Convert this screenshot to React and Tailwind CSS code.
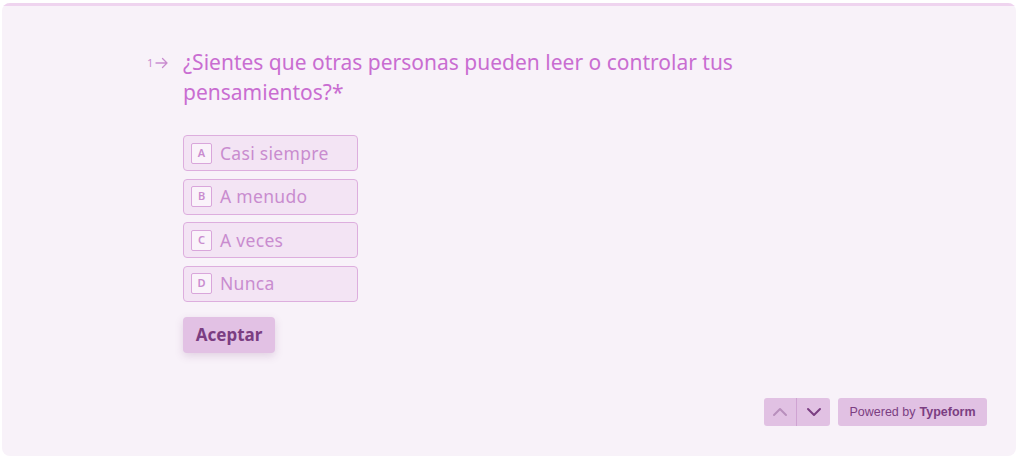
import React, { useState } from 'react'

const choices = [
    { key: 'A', label: 'Casi siempre' },
    { key: 'B', label: 'A menudo' },
    { key: 'C', label: 'A veces' },
    { key: 'D', label: 'Nunca' },
]

const Chevron = ({ up, className }) => (
    <svg width="18" height="18" viewBox="0 0 18 18" fill="none" className={className}>
        <path
            d={up ? 'M3 12 L9 6 L15 12' : 'M3 6 L9 12 L15 6'}
            stroke="currentColor"
            strokeWidth="2"
            strokeLinecap="round"
            strokeLinejoin="round"
        />
    </svg>
)

const App = () => {
    const [selected, setSelected] = useState(null)

    return (
        <div className="w-[1024px] h-[464px] bg-white p-[2px] pt-[3px] pr-[8px] pb-[8px]" style={{ fontFamily: '"Noto Sans", Lato, sans-serif' }}>
            <div className="relative h-full rounded-lg bg-[#f8f2f9] overflow-hidden flex flex-col">
                {/* progress */}
                <div className="h-[3px] bg-[#efd4ef]" />

                <div className="flex-1 pl-[145px] pt-[41px]">
                    <div className="flex">
                        <div className="w-[36px] flex items-start pt-[10px] text-[#c98ccf]">
                            <span className="text-[11px] leading-none">1</span>
                            <svg width="14" height="12" viewBox="0 0 14 12" fill="none" className="ml-[2px]">
                                <path d="M1 6 H12 M7.5 1.5 L12 6 L7.5 10.5" stroke="currentColor" strokeWidth="1.3" strokeLinecap="round" strokeLinejoin="round" />
                            </svg>
                        </div>
                        <div>
                            <h1 className="text-[21px] leading-[30px] text-[#c96dd1] w-[580px]">
                                ¿Sientes que otras personas pueden leer o controlar tus pensamientos?*
                            </h1>

                            <div className="mt-[28px] flex flex-col gap-[7.5px]">
                                {choices.map((c) => (
                                    <button
                                        key={c.key}
                                        onClick={() => setSelected(c.key)}
                                        className={`w-[175px] h-[36px] flex items-center gap-[8px] px-[7px] rounded-[4px] border text-left ${selected === c.key ? 'bg-[#ecd3ee] border-[#c97fcf]' : 'bg-[#f3e4f4] border-[#ddaede]'}`}
                                    >
                                        <span className="w-[21px] h-[21px] flex items-center justify-center rounded-[2px] border border-[#d9a6db] bg-[#faf3fa] text-[11px] font-semibold text-[#c98ccf]">
                                            {c.key}
                                        </span>
                                        <span className="text-[17.5px] text-[#c98ccf] tracking-[0.3px]">{c.label}</span>
                                    </button>
                                ))}
                            </div>

                            <button className="mt-[15px] w-[92px] h-[36px] rounded-[4px] bg-[#e2c1e4] shadow-[0_3px_8px_rgba(120,60,130,0.18)] text-[17px] font-bold text-[#7b3e82]">
                                Aceptar
                            </button>
                        </div>
                    </div>
                </div>

                {/* footer controls */}
                <div className="flex justify-end items-center gap-[8px] pr-[29px] pb-[30px]">
                    <div className="flex h-[28px] rounded-[3px] bg-[#e1c1e3] overflow-hidden">
                        <button className="w-[33px] flex items-center justify-center border-r border-[#cfa3d2] text-[#b88fbc]">
                            <Chevron up />
                        </button>
                        <button className="w-[33px] flex items-center justify-center text-[#7b3e82]">
                            <Chevron />
                        </button>
                    </div>
                    <div className="h-[28px] w-[149px] rounded-[3px] bg-[#e1c1e3] flex items-center justify-center text-[12.5px] text-[#7b3e82]" style={{ fontFamily: '"Liberation Sans", Arial, sans-serif' }}>
                        Powered by <span className="ml-[4px] font-bold">Typeform</span>
                    </div>
                </div>
            </div>
        </div>
    )
}

export default App
